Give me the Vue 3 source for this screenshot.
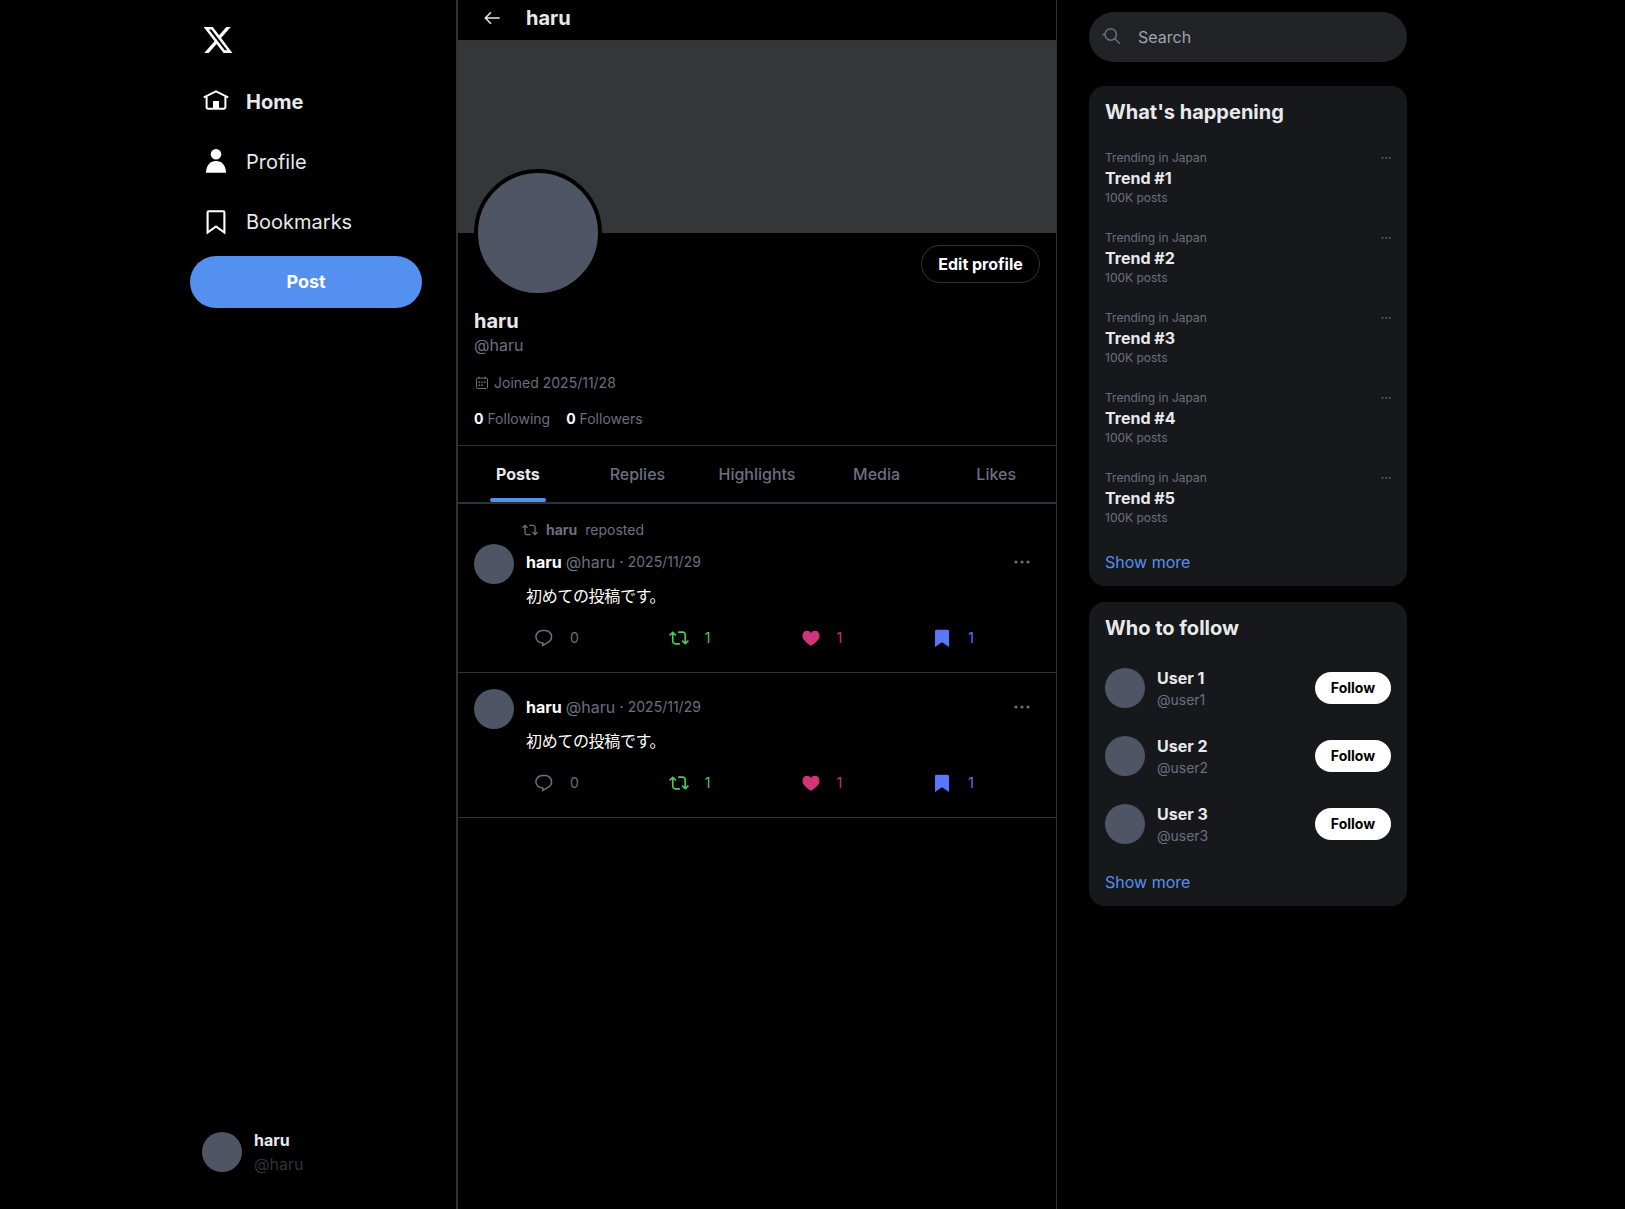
<script setup>
import { ref } from 'vue'

const navItems = [
  { name: 'Home', icon: 'home', active: true },
  { name: 'Profile', icon: 'profile', active: false },
  { name: 'Bookmarks', icon: 'bookmark', active: false },
]

const tabs = ['Posts', 'Replies', 'Highlights', 'Media', 'Likes']
const activeTab = ref('Posts')

const user = {
  name: 'haru',
  handle: '@haru',
  joined: '2025/11/28',
  following: 0,
  followers: 0,
}

const posts = [
  { id: 1, repostedBy: 'haru', date: '2025/11/29', body: '初めての投稿です。', replies: 0, reposts: 1, likes: 1, bookmarks: 1 },
  { id: 2, repostedBy: null, date: '2025/11/29', body: '初めての投稿です。', replies: 0, reposts: 1, likes: 1, bookmarks: 1 },
]

const trends = [1, 2, 3, 4, 5]
const suggestions = [1, 2, 3]
</script>

<template>
  <div class="layout">
    <aside class="sidebar">
      <div>
        <a class="logo">
          <svg viewBox="0 0 24 24" width="32" height="32" fill="currentColor">
            <path d="M18.244 2.25h3.308l-7.227 8.26 8.502 11.24H16.17l-5.214-6.817L4.99 21.75H1.68l7.73-8.835L1.254 2.25H8.08l4.713 6.231zm-1.161 17.52h1.833L7.084 4.126H5.117z" />
          </svg>
        </a>
        <nav class="nav">
          <a v-for="item in navItems" :key="item.name" class="nav-item" :class="{ active: item.active }">
            <svg v-if="item.icon === 'home'" class="nav-icon" viewBox="0 0 28 28">
              <path d="M1.800 9.400L14 3.400l12.200 6M4.600 8.500V19a1.800 1.800 0 0 0 1.800 1.800h15.200a1.800 1.800 0 0 0 1.800-1.800V8.500" fill="none" stroke="currentColor" stroke-width="2" />
              <path d="M11 13h6v8h-6z" fill="currentColor" />
            </svg>
            <svg v-else-if="item.icon === 'profile'" class="nav-icon" viewBox="0 0 28 28">
              <circle cx="14" cy="6.300" r="5.300" fill="currentColor" />
              <path d="M4 24.700c0-7 4-11.700 10-11.700s10 4.700 10 11.700z" fill="currentColor" />
            </svg>
            <svg v-else class="nav-icon" viewBox="0 0 28 28">
              <path d="M5.600 24.500V4.400c0-.8.5-1.200 1.200-1.200h14.400c.7 0 1.200.4 1.200 1.200v20.100L14 18.500z" fill="none" stroke="currentColor" stroke-width="2.100" />
            </svg>
            <span>{{ item.name }}</span>
          </a>
          <button class="post-btn">Post</button>
        </nav>
      </div>
      <div class="account">
        <div class="avatar"></div>
        <div>
          <div class="account-name">{{ user.name }}</div>
          <div class="account-handle">{{ user.handle }}</div>
        </div>
      </div>
    </aside>

    <main class="main">
      <header class="page-header">
        <svg class="back" viewBox="0 0 20 20" width="20" height="20" fill="none" stroke="currentColor" stroke-width="1.500">
          <path d="M17.700 10H3.600M9 4.300L3.300 10 9 15.700" />
        </svg>
        <h2>{{ user.name }}</h2>
      </header>
      <div class="banner"></div>
      <section class="profile">
        <div class="profile-top">
          <div class="profile-avatar"></div>
          <button class="edit-btn">Edit profile</button>
        </div>
        <h2 class="profile-name">{{ user.name }}</h2>
        <p class="profile-handle">{{ user.handle }}</p>
        <p class="joined">
          <svg viewBox="0 0 16 16" width="16" height="16" fill="none" stroke="currentColor">
            <rect x="2.500" y="3" width="11" height="10.500" rx="1.200" />
            <path d="M5 1.500V4M11 1.500V4" />
            <path d="M4.500 7.200h7M4.500 10.200h5" stroke-width="1.400" stroke-dasharray="1.600 1.100" />
          </svg>
          <span>Joined {{ user.joined }}</span>
        </p>
        <p class="stats">
          <span><b>{{ user.following }}</b> Following</span>
          <span><b>{{ user.followers }}</b> Followers</span>
        </p>
      </section>

      <div class="tabs">
        <button v-for="tab in tabs" :key="tab" class="tab" :class="{ active: tab === activeTab }" @click="activeTab = tab">
          {{ tab }}
        </button>
      </div>

      <div class="posts">
        <article v-for="post in posts" :key="post.id" class="post">
          <div v-if="post.repostedBy" class="reposted">
            <svg viewBox="0 0 24 24" width="16" height="16" fill="currentColor">
              <path d="M4.500 3.880l4.432 4.140-1.364 1.460L5.500 7.550V16c0 1.100.896 2 2 2H13v2H7.500c-2.209 0-4-1.790-4-4V7.550L1.432 9.480.068 8.020 4.500 3.880zM16.500 6H11V4h5.500c2.209 0 4 1.790 4 4v8.450l2.068-1.930 1.364 1.460-4.432 4.140-4.432-4.140 1.364-1.460 2.068 1.930V8c0-1.100-.896-2-2-2z" />
            </svg>
            <b>{{ post.repostedBy }}</b>
            <span>reposted</span>
          </div>
          <div class="post-row">
            <div class="avatar"></div>
            <div class="post-content">
              <div class="post-header">
                <b>{{ user.name }}</b>
                <span>{{ user.handle }}</span>
                <span>·</span>
                <span class="date">{{ post.date }}</span>
                <svg class="more" viewBox="0 0 20 20" width="20" height="20" fill="currentColor">
                  <circle cx="4" cy="10" r="1.600" /><circle cx="10" cy="10" r="1.600" /><circle cx="16" cy="10" r="1.600" />
                </svg>
              </div>
              <p class="post-body">{{ post.body }}</p>
              <div class="actions">
                <div class="action">
                  <svg viewBox="0 0 20 20" width="20" height="20" fill="none" stroke="currentColor" stroke-width="1.500">
                    <path d="M8.200 14.900C4.700 14.700 1.900 12.200 1.900 8.800c0-3.600 2.900-6.200 6.400-6.200h3c3.500 0 6.300 2.700 6.300 6.100 0 2.400-1.300 4.300-3.300 5.400l-5.500 3.400v-2.600z" />
                  </svg>
                  <span>{{ post.replies }}</span>
                </div>
                <div class="action green">
                  <svg viewBox="0 0 24 24" width="20" height="20" fill="currentColor">
                    <path d="M4.500 3.880l4.432 4.140-1.364 1.460L5.500 7.550V16c0 1.100.896 2 2 2H13v2H7.500c-2.209 0-4-1.790-4-4V7.550L1.432 9.480.068 8.020 4.500 3.880zM16.500 6H11V4h5.500c2.209 0 4 1.790 4 4v8.450l2.068-1.930 1.364 1.460-4.432 4.140-4.432-4.140 1.364-1.460 2.068 1.930V8c0-1.100-.896-2-2-2z" />
                  </svg>
                  <span>{{ post.reposts }}</span>
                </div>
                <div class="action pink">
                  <svg viewBox="0 0 20 20" width="20" height="20" fill="currentColor">
                    <path d="M10 17.700C5 14.800 1.500 11.500 1.500 7.700c0-2.900 2-4.900 4.500-4.900 1.700 0 3.100.8 4 2.200.9-1.400 2.300-2.200 4-2.200 2.500 0 4.500 2 4.500 4.900 0 3.800-3.500 7.100-8.500 10z" />
                  </svg>
                  <span>{{ post.likes }}</span>
                </div>
                <div class="action blue">
                  <svg viewBox="0 0 20 20" width="20" height="20" fill="currentColor">
                    <path d="M3 19V3.200C3 2.300 3.600 1.700 4.500 1.700h11c.9 0 1.500.6 1.500 1.500V19l-7-4.800z" />
                  </svg>
                  <span>{{ post.bookmarks }}</span>
                </div>
              </div>
            </div>
          </div>
        </article>
      </div>
    </main>

    <aside class="widgets">
      <div class="search">
        <svg viewBox="0 0 20 20" width="20" height="20" fill="none" stroke="currentColor" stroke-width="1.500">
          <circle cx="8.700" cy="8.500" r="5.700" />
          <path d="M12.700 12.500l5.200 5.200M.4 9l2.600-1" />
        </svg>
        <span>Search</span>
      </div>
      <section class="card">
        <h2>What's happening</h2>
        <div v-for="n in trends" :key="n" class="trend">
          <div class="trend-label">
            <span>Trending in Japan</span>
            <svg viewBox="0 0 12 12" width="12" height="12" fill="currentColor">
              <circle cx="3.500" cy="5.800" r=".9" /><circle cx="7" cy="5.800" r=".9" /><circle cx="10.500" cy="5.800" r=".9" />
            </svg>
          </div>
          <div class="trend-name">Trend #{{ n }}</div>
          <div class="trend-count">100K posts</div>
        </div>
        <a class="show-more">Show more</a>
      </section>
      <section class="card">
        <h2>Who to follow</h2>
        <div v-for="n in suggestions" :key="n" class="suggestion">
          <div class="avatar"></div>
          <div class="suggestion-info">
            <div class="suggestion-name">User {{ n }}</div>
            <div class="suggestion-handle">@user{{ n }}</div>
          </div>
          <button class="follow-btn">Follow</button>
        </div>
        <a class="show-more">Show more</a>
      </section>
    </aside>
  </div>
</template>

<style>
body { background: #000; }
</style>

<style scoped>
.layout { display: flex; width: 1261px; height: 1209px; margin: 0 auto; overflow: hidden; background: #000; color: #e7e9ea; font-family: Inter, "Noto Sans CJK JP", sans-serif; font-size: 16px; line-height: 24px; }
.layout * { box-sizing: border-box; }
h2, p { margin: 0; }
h2 { font-size: 20px; line-height: 28px; font-weight: 700; }
b { font-weight: 700; }
svg { display: block; flex-shrink: 0; }
button { border: 0; padding: 0; font-family: inherit; cursor: pointer; }
.avatar { width: 40px; height: 40px; border-radius: 50%; background: #4f5565; flex-shrink: 0; }

.sidebar { width: 275px; flex-shrink: 0; display: flex; flex-direction: column; justify-content: space-between; padding: 12px 34px 33px 8px; border-right: 1px solid #2f3336; }
.logo { display: block; padding: 12px; color: #fff; }
.nav { display: flex; flex-direction: column; gap: 8px; margin-top: 8px; }
.nav-item { display: flex; align-items: center; gap: 16px; height: 52px; padding-left: 12px; font-size: 20px; line-height: 28px; }
.nav-item.active { font-weight: 700; }
.nav-icon { width: 28px; height: 28px; color: #fff; }
.post-btn { height: 52px; padding-bottom: 1px; border-radius: 26px; background: #5490f0; color: #fff; font-size: 18px; font-weight: 700; }
.account { display: flex; align-items: center; gap: 12px; padding: 0 12px; }
.account-name { font-weight: 700; }
.account-handle { color: #2f3336; }

.main { width: 600px; flex-shrink: 0; border-left: 1px solid #2f3336; border-right: 1px solid #2f3336; }
.page-header { display: flex; align-items: center; gap: 24px; height: 41px; padding: 0 24px 5px; border-bottom: 1px solid #2f3336; }
.banner { height: 192px; background: #35363a; }
.profile { padding: 0 16px 16px; border-bottom: 1px solid #2f3336; }
.profile-top { display: flex; justify-content: space-between; height: 74px; }
/* pulled up so it overlaps the banner */
.profile-avatar { width: 128px; height: 128px; margin-top: -64px; border: 4px solid #000; border-radius: 50%; background: #4f5565; }
.edit-btn { width: 119px; height: 38px; margin-top: 12px; border: 1px solid #2f3336; border-radius: 19px; background: #000; color: #fff; font-size: 16px; font-weight: 700; }
.profile-name { height: 26px; }
.profile-handle { color: #6b6f80; }
.joined { display: flex; align-items: center; gap: 4px; margin-top: 16px; font-size: 14px; line-height: 20px; color: #6b6f80; }
.stats { display: flex; gap: 16px; margin-top: 16px; font-size: 14px; line-height: 20px; color: #6b6f80; }
.stats b { color: #fff; }

.tabs { display: flex; border-bottom: 1px solid #2f3336; }
.tab { position: relative; flex: 1; height: 56px; background: none; font-size: 16px; font-weight: 500; color: #6b6f80; }
.tab.active { font-weight: 700; color: #e7e9ea; }
.tab.active::after { content: ''; position: absolute; bottom: 0; left: 50%; width: 56px; height: 4px; margin-left: -28px; border-radius: 2px; background: #5490f0; }

.posts { border-top: 1px solid #2f3336; }
.post { padding: 16px; border-bottom: 1px solid #2f3336; }
.reposted { display: flex; align-items: center; gap: 8px; height: 24px; padding: 0 0 4px 48px; font-size: 14px; line-height: 20px; color: #6b6f80; }
.post-row { display: flex; gap: 12px; }
.post-content { flex: 1; }
.post-header { display: flex; align-items: center; gap: 4px; height: 36px; color: #6b6f80; }
.post-header b { color: #fff; }
.date { font-size: 14px; }
.more { margin: 0 8px 0 auto; }
.post-body { margin-top: 4px; letter-spacing: -0.35px; color: #fff; }
.actions { display: flex; justify-content: space-between; margin-top: 12px; padding-right: 66px; color: #6b6f80; }
.action { display: flex; align-items: center; gap: 16px; height: 36px; padding-left: 8px; font-size: 14px; }
.green { color: #4fc85b; }
.pink { color: #d0347a; }
.blue { color: #5b76fb; }

.widgets { width: 350px; padding: 12px 0 0 32px; }
.search { display: flex; align-items: center; gap: 16px; height: 50px; margin-bottom: 24px; padding-left: 13px; border-radius: 25px; background: #222327; color: #a0a3ad; }
.search svg { margin-top: -2px; color: #6b6f80; }
.card { margin-bottom: 16px; border-radius: 16px; background: #17181c; }
.card h2 { padding: 12px 16px; }
.trend { padding: 12px 16px; }
.trend-label { display: flex; justify-content: space-between; align-items: center; }
.trend-label, .trend-count { font-size: 12px; line-height: 16px; color: #6b6f80; }
.trend-name, .suggestion-name { font-weight: 700; }
.show-more { display: block; padding: 12px 16px; color: #5490f0; }
.suggestion { display: flex; align-items: center; gap: 12px; padding: 12px 16px; }
.suggestion-info { flex: 1; }
.suggestion-handle { font-size: 14px; line-height: 20px; color: #6b6f80; }
.follow-btn { width: 76px; height: 32px; padding-bottom: 1px; border-radius: 16px; background: #fff; color: #000; font-size: 14px; font-weight: 700; }
</style>
